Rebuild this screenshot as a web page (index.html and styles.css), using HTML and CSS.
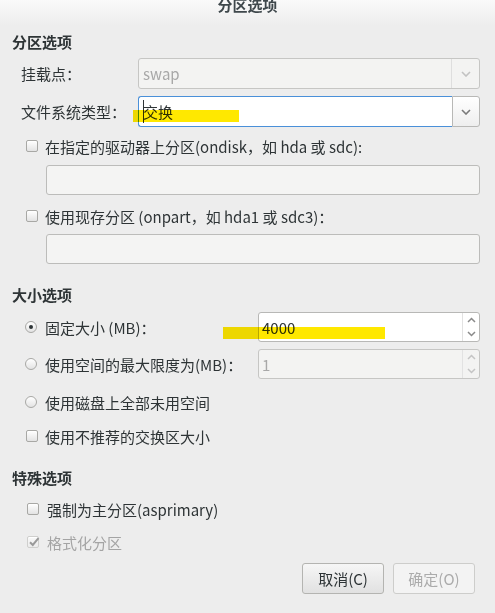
FILE: index.html
```html
<!DOCTYPE html>
<html lang="zh-CN">
<head>
<meta charset="utf-8">
<title>分区选项</title>
<link rel="stylesheet" href="styles.css">
</head>
<body>
<div class="titlebar">分区选项</div>
<div class="content">
  <div class="heading h-part">分区选项</div>

  <div class="field-row r-mount">
    <span class="field-label">挂载点：</span>
    <div class="combo combo-disabled">
      <span class="combo-text">swap</span>
      <span class="combo-btn"><svg width="10" height="6" viewBox="0 0 10 6"><path d="M1 1 L5 5 L9 1" fill="none" stroke="#c2c2c2" stroke-width="1.6"/></svg></span>
    </div>
  </div>

  <div class="field-row r-fs">
    <span class="field-label">文件系统类型：</span>
    <div class="combo combo-focus">
      <span class="combo-text"><span class="caret"></span>交换</span>
      <span class="combo-btn"><svg width="10" height="6" viewBox="0 0 10 6"><path d="M1 1 L5 5 L9 1" fill="none" stroke="#7a7a7a" stroke-width="1.6"/></svg></span>
    </div>
    <span class="highlight hl-fs"></span>
  </div>

  <div class="check-row r-ondisk">
    <span class="checkbox"></span>
    <span>在指定的驱动器上分区(ondisk，如 hda 或 sdc):</span>
  </div>
  <div class="entry r-entry1"></div>

  <div class="check-row r-onpart">
    <span class="checkbox"></span>
    <span>使用现存分区 (onpart，如 hda1 或 sdc3)：</span>
  </div>
  <div class="entry r-entry2"></div>

  <div class="heading h-size">大小选项</div>

  <div class="spin-row r-fixed">
    <span class="radio radio-on"></span>
    <span class="spin-label">固定大小 (MB)：</span>
    <div class="spin">
      <span class="spin-text">4000</span>
      <span class="spin-btns">
        <span class="spin-half"><svg width="9" height="6" viewBox="0 0 9 6"><path d="M1 5 L4.5 1.5 L8 5" fill="none" stroke="#8a8a8a" stroke-width="1.5"/></svg></span>
        <span class="spin-half"><svg width="9" height="6" viewBox="0 0 9 6"><path d="M1 1 L4.5 4.5 L8 1" fill="none" stroke="#8a8a8a" stroke-width="1.5"/></svg></span>
      </span>
    </div>
    <span class="highlight hl-size"></span>
  </div>

  <div class="spin-row r-max">
    <span class="radio"></span>
    <span class="spin-label">使用空间的最大限度为(MB)：</span>
    <div class="spin spin-disabled">
      <span class="spin-text">1</span>
      <span class="spin-btns">
        <span class="spin-half"><svg width="9" height="6" viewBox="0 0 9 6"><path d="M1 5 L4.5 1.5 L8 5" fill="none" stroke="#c4c4c4" stroke-width="1.5"/></svg></span>
        <span class="spin-half"><svg width="9" height="6" viewBox="0 0 9 6"><path d="M1 1 L4.5 4.5 L8 1" fill="none" stroke="#c4c4c4" stroke-width="1.5"/></svg></span>
      </span>
    </div>
  </div>

  <div class="check-row r-all">
    <span class="radio"></span>
    <span>使用磁盘上全部未用空间</span>
  </div>

  <div class="check-row r-swap">
    <span class="checkbox"></span>
    <span>使用不推荐的交换区大小</span>
  </div>

  <div class="heading h-special">特殊选项</div>

  <div class="check-row r-primary">
    <span class="checkbox"></span>
    <span>强制为主分区(asprimary)</span>
  </div>

  <div class="check-row r-format disabled">
    <span class="checkbox checkbox-checked"><svg width="12" height="12" viewBox="0 0 12 12"><path d="M2 6.2 L4.8 9 L10.5 2.2" fill="none" stroke="#9a9a9a" stroke-width="2"/></svg></span>
    <span>格式化分区</span>
  </div>

  <div class="button-row">
    <button class="btn">取消(C)</button>
    <button class="btn btn-disabled">确定(O)</button>
  </div>
</div>
</body>
</html>
```

FILE: styles.css
```css
* { box-sizing: border-box; }

html, body {
  margin: 0;
  padding: 0;
  background: #ededed;
}

body {
  width: 495px;
  height: 613px;
  overflow: hidden;
  font-family: "Noto Sans CJK SC", "DejaVu Sans", sans-serif;
  font-size: 15px;
  color: #2e3436;
}

.titlebar {
  height: 26px;
  line-height: 10px;
  text-align: center;
  font-weight: bold;
  color: #3f484c;
  background: linear-gradient(#fafafa, #ededed);
}

.content {
  padding: 0 15px 0 12px;
}

.heading {
  height: 20px;
  line-height: 20px;
  font-weight: bold;
  color: #2e3436;
}

.h-part { margin-top: 6px; }
.h-size { margin-top: 21px; }
.h-special { margin-top: 22px; }

.field-row {
  position: relative;
  display: flex;
  align-items: center;
  height: 31px;
  padding-left: 9px;
}

.r-mount { margin-top: 6px; }
.r-fs { margin-top: 7px; }

.field-label {
  white-space: nowrap;
}

.combo {
  margin-left: auto;
  width: 342px;
  height: 31px;
  display: flex;
}

.combo-text {
  flex: 1;
  display: flex;
  align-items: center;
  padding-left: 4px;
  white-space: nowrap;
}

.combo-btn {
  width: 28px;
  display: flex;
  align-items: center;
  justify-content: center;
}

.combo-disabled {
  border: 1px solid #c6c6c4;
  border-radius: 3px;
  background: #f3f3f2;
  color: #a8a8a8;
}

.combo-disabled .combo-btn {
  border-left: 1px solid #dedede;
}

.combo-focus .combo-text {
  background: #ffffff;
  border: 1px solid #4a90d9;
  border-right: none;
  border-radius: 3px 0 0 3px;
  padding-left: 4px;
}

.combo-focus .combo-btn {
  border: 1px solid #b8b8b6;
  border-radius: 0 3px 3px 0;
  background: linear-gradient(#ffffff, #eeeeee);
}

.caret {
  display: inline-block;
  width: 1px;
  height: 23px;
  background: #2e3436;
  margin-right: -1px;
}

.highlight {
  position: absolute;
  height: 12px;
  background: #ffe800;
  mix-blend-mode: multiply;
}

.hl-fs {
  left: 121px;
  top: 14px;
  width: 106px;
}

.hl-size {
  left: 211px;
  top: 15px;
  width: 162px;
}

.check-row {
  display: flex;
  align-items: center;
  gap: 7px;
  height: 20px;
  padding-left: 14px;
  white-space: nowrap;
}

.r-ondisk { margin-top: 9px; }
.r-onpart { margin-top: 11px; }
.r-all { margin-top: 13px; padding-left: 13px; gap: 8px; }
.r-swap { margin-top: 14px; }
.r-primary { margin-top: 11px; padding-left: 15px; gap: 8px; }
.r-format { margin-top: 13px; padding-left: 15px; gap: 8px; }

.check-row.disabled {
  color: #a4a4a4;
}

.checkbox {
  flex: none;
  width: 12px;
  height: 12px;
  border: 1px solid #a8a8a5;
  border-radius: 2px;
  background: linear-gradient(#ffffff, #e3e3e3);
  box-shadow: inset 0 1px 0 #ffffff;
  position: relative;
}

.checkbox-checked {
  border-color: #cfcfcd;
  background: linear-gradient(#f8f8f8, #ececec);
}

.checkbox-checked svg {
  position: absolute;
  left: 0;
  top: -1px;
}

.radio {
  flex: none;
  width: 12px;
  height: 12px;
  border: 1px solid #a8a8a5;
  border-radius: 50%;
  background: linear-gradient(#ffffff, #e3e3e3);
  display: flex;
  align-items: center;
  justify-content: center;
}

.radio-on::after {
  content: "";
  width: 4px;
  height: 4px;
  border-radius: 50%;
  background: #2e3436;
}

.entry {
  margin-left: 34px;
  height: 30px;
  border: 1px solid #bcbcba;
  border-radius: 3px;
  background: #f4f4f3;
}

.r-entry1 { margin-top: 9px; }
.r-entry2 { margin-top: 8px; }

.spin-row {
  position: relative;
  display: flex;
  align-items: center;
  height: 30px;
  padding-left: 13px;
  white-space: nowrap;
}

.r-fixed { margin-top: 7px; }
.r-max { margin-top: 7px; }

.spin-label {
  margin-left: 8px;
}

.spin {
  margin-left: auto;
  width: 222px;
  height: 30px;
  display: flex;
  border: 1px solid #b8b8b6;
  border-radius: 3px;
  background: #ffffff;
}

.spin-text {
  flex: 1;
  display: flex;
  align-items: center;
  padding-left: 3px;
}

.spin-btns {
  width: 17px;
  display: flex;
  flex-direction: column;
  border-left: 1px solid #e2e2e2;
}

.spin-half {
  flex: 1;
  display: flex;
  align-items: center;
  justify-content: center;
}

.spin-disabled {
  background: #f3f3f2;
  border-color: #c6c6c4;
  color: #a8a8a8;
}

.button-row {
  display: flex;
  justify-content: flex-end;
  gap: 9px;
  margin-top: 11px;
  padding-right: 5px;
}

.btn {
  width: 82px;
  height: 31px;
  padding: 0;
  font-family: inherit;
  font-size: 15px;
  color: #2e3436;
  border: 1px solid #b4b4b1;
  border-radius: 3px;
  background: linear-gradient(#f6f6f6, #e1e1e1);
}

.btn-disabled {
  color: #ababab;
  border-color: #cdcdcb;
  background: #f3f3f3;
}
```
